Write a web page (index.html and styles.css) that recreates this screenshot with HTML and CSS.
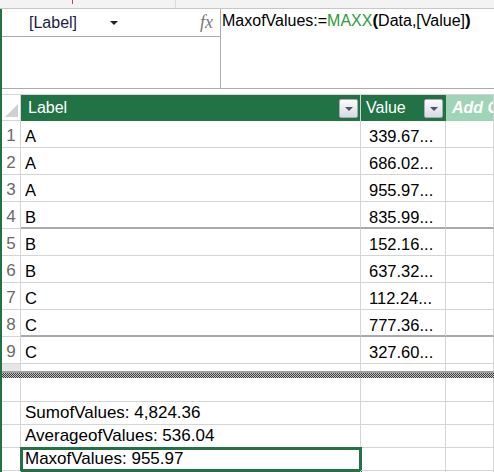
FILE: index.html
```html
<!DOCTYPE html>
<html lang="en">
<head>
  <meta charset="UTF-8" />
  <title>MaxofValues</title>
  <link rel="stylesheet" href="styles.css">
</head>
<body>
  <div class="topstrip"><span class="mark-red"></span><span class="mark-gray"></span></div>

  <div class="window">
    <div class="formula-bar">
      <div class="name-col">
        <div class="name-row">
          <span class="name-box">[Label]</span>
          <span class="caret"></span>
          <span class="fx">fx</span>
        </div>
      </div>
      <div class="formula">MaxofValues:=<span class="fn">MAXX</span><span class="paren">(</span>Data,[Value]<span class="paren">)</span></div>
    </div>

    <div class="gap"></div>

    <div class="sheet upper">
      <div class="row head">
        <div class="rh corner"><span class="tri"></span></div>
        <div class="c hcell">Label<span class="filter"></span></div>
        <div class="c hcell">Value<span class="filter"></span></div>
        <div class="c hadd">Add Column</div>
      </div>
      <div class="row"><div class="rh">1</div><div class="c">A</div><div class="c num">339.67...</div><div class="c"></div></div>
      <div class="row"><div class="rh">2</div><div class="c">A</div><div class="c num">686.02...</div><div class="c"></div></div>
      <div class="row"><div class="rh">3</div><div class="c">A</div><div class="c num">955.97...</div><div class="c"></div></div>
      <div class="row pb"><div class="rh">4</div><div class="c">B</div><div class="c num">835.99...</div><div class="c"></div></div>
      <div class="row"><div class="rh">5</div><div class="c">B</div><div class="c num">152.16...</div><div class="c"></div></div>
      <div class="row"><div class="rh">6</div><div class="c">B</div><div class="c num">637.32...</div><div class="c"></div></div>
      <div class="row"><div class="rh">7</div><div class="c">C</div><div class="c num">112.24...</div><div class="c"></div></div>
      <div class="row pb"><div class="rh">8</div><div class="c">C</div><div class="c num">777.36...</div><div class="c"></div></div>
      <div class="row"><div class="rh">9</div><div class="c">C</div><div class="c num">327.60...</div><div class="c"></div></div>
      <div class="row stub"><div class="rh"></div><div class="c"></div><div class="c"></div><div class="c"></div></div>
    </div>

    <div class="split"></div>

    <div class="sheet lower">
      <div class="row first"><div class="rh"></div><div class="c"></div><div class="c"></div><div class="c"></div></div>
      <div class="row"><div class="rh"></div><div class="c">SumofValues: 4,824.36</div><div class="c"></div><div class="c"></div></div>
      <div class="row"><div class="rh"></div><div class="c">AverageofValues: 536.04</div><div class="c"></div><div class="c"></div></div>
      <div class="row"><div class="rh"></div><div class="c selected">MaxofValues: 955.97</div><div class="c"></div><div class="c"></div></div>
      <div class="row"><div class="rh"></div><div class="c"></div><div class="c"></div><div class="c"></div></div>
    </div>
  </div>
</body>
</html>
```

FILE: styles.css
```css
* {
  box-sizing: border-box;
}

body {
  margin: 0;
  width: 494px;
  height: 472px;
  overflow: hidden;
  background: #fff;
  color: #000;
  font-family: "Liberation Sans", Arial, sans-serif;
}

.topstrip {
  height: 9px;
  background: #f3f3f3;
  border-bottom: 1px solid #c6c6c6;
  display: flex;
}

.mark-red {
  margin-left: 72px;
  width: 1px;
  height: 4px;
  background: #b8455a;
}

.mark-gray {
  margin-left: 102px;
  width: 1px;
  height: 8px;
  background: #dadada;
}

.window {
  height: 463px;
  border-left: 2px solid #217346;
  display: flex;
  flex-direction: column;
}

/* formula bar */
.formula-bar {
  height: 80px;
  flex: none;
  display: flex;
  border-bottom: 1px solid #ababab;
}

.name-col {
  width: 219px;
  border-right: 1px solid #ababab;
}

.name-row {
  height: 28px;
  border-bottom: 1px solid #ababab;
  display: flex;
  align-items: center;
}

.name-box {
  margin-left: 27px;
  width: 81px;
  font-size: 16px;
  color: #1c1c40;
}

.caret {
  width: 0;
  height: 0;
  border-left: 4px solid transparent;
  border-right: 4px solid transparent;
  border-top: 4px solid #222;
}

.fx {
  margin-left: 82px;
  font-family: "Liberation Serif", serif;
  font-style: italic;
  font-size: 18px;
  color: #777;
}

.formula {
  padding: 2px 0 0 1px;
  font-size: 16px;
  line-height: 20px;
  white-space: nowrap;
}

.fn {
  color: #2f9a3a;
}

.paren {
  font-weight: bold;
  font-size: 17px;
}

.gap {
  height: 5px;
  flex: none;
}

/* grid */
.upper {
  border-top: 1px solid #d4d4d4;
  flex: none;
}

.row {
  display: grid;
  grid-template-columns: 19px 340px 85px 1fr;
  height: 27px;
}

.rh,
.c {
  border-right: 1px solid #d4d4d4;
  border-bottom: 1px solid #d4d4d4;
  white-space: nowrap;
  overflow: hidden;
}

.rh {
  text-align: center;
  color: #6a6a6a;
  font-size: 17px;
  line-height: 20px;
  padding-top: 5px;
}

.c {
  font-size: 16.5px;
  line-height: 20px;
  padding: 5px 0 0 4px;
}

.c.num {
  padding-left: 8px;
}

.row.pb .c {
  border-bottom: 2px solid #a9a9a9;
}

.row.head {
  height: 26px;
}

.corner {
  display: flex;
  align-items: flex-end;
  justify-content: flex-end;
  padding: 0 2px 3px 0;
}

.tri {
  width: 0;
  height: 0;
  border-left: 13px solid transparent;
  border-bottom: 13px solid #d0d0d0;
}

.hcell {
  background: #217346;
  color: #fff;
  font-size: 16px;
  border-bottom: none;
  display: flex;
  align-items: center;
  justify-content: space-between;
  padding: 0 2px 0 7px;
}

.hcell + .hcell {
  padding-left: 5px;
  border-right-color: #217346;
}

.hadd {
  background: #9fd5b6;
  color: #fff;
  font-size: 16px;
  font-weight: bold;
  font-style: italic;
  border-bottom: none;
  padding: 3px 0 0 6px;
}

.filter {
  width: 19px;
  height: 19px;
  border: 1px solid #a9abb8;
  border-radius: 2px;
  background: linear-gradient(#fbfbfb, #d9dae2);
  display: flex;
  align-items: center;
  justify-content: center;
}

.filter::after {
  content: "";
  border-left: 4px solid transparent;
  border-right: 4px solid transparent;
  border-top: 4px solid #4c5270;
  margin-top: 1px;
}

.row.stub {
  height: 7px;
}

.row.stub .rh {
  background: #e6e6e6;
  padding: 0;
}

.row.stub .rh,
.row.stub .c {
  border-bottom: none;
  padding: 0;
}

.split {
  height: 7px;
  flex: none;
  border-top: 2px solid #a0a0a0;
  background: repeating-conic-gradient(#3c3c3c 0 25%, #c4c4c4 0 50%) 0 0 / 2px 2px;
}

.lower .row {
  height: 23px;
}

.lower .row.first {
  height: 24px;
}

.lower .c {
  font-size: 17px;
  line-height: 22px;
  padding: 0 0 0 4px;
}

.lower .rh {
  padding: 0;
}

.selected {
  outline: 3px solid #217346;
  outline-offset: -2px;
}
```
